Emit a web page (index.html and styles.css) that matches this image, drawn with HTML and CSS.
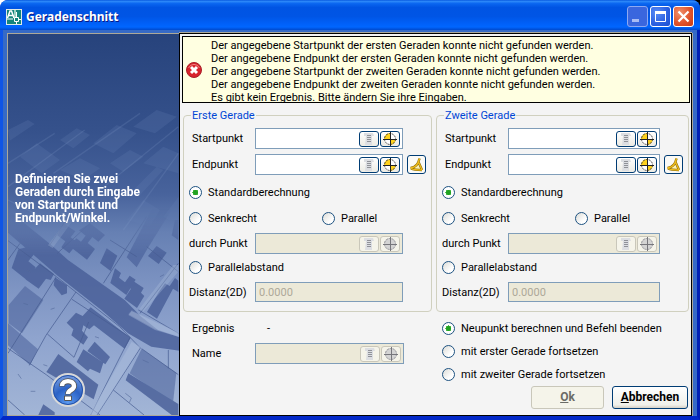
FILE: index.html
```
<!DOCTYPE html>
<html lang="de">
<head>
<meta charset="utf-8">
<title>Geradenschnitt</title>
<link rel="stylesheet" href="styles.css">
</head>
<body>
<svg class="defs" width="0" height="0" aria-hidden="true">
  <defs>
    <symbol id="i-list" viewBox="0 0 18 14">
      <path class="paper" d="M4 1h9l1 3h-2v9H5l1-9H4z"/>
      <path class="lines" d="M7 3.500h4M7 5.500h4M7 7.500h4M7 9.500h4"/>
    </symbol>
    <symbol id="i-target" viewBox="0 0 18 14">
      <circle class="disc" cx="9" cy="7" r="6"/>
      <path class="quad" d="M9 7V1a6 6 0 0 0-6 6zM9 7V13a6 6 0 0 0 6-6z"/>
      <circle class="ring" cx="9" cy="7" r="5.500"/>
      <path class="cross" d="M9.500 0v14M2 7.500h14"/>
    </symbol>
    <symbol id="i-angle" viewBox="0 0 17 17">
      <path d="M3 12l4 1h5L9.500 8.500z" fill="#fff3b0"/>
      <path d="M11.500 2.500c-1 5-4 9-9 9.500M10.500 6l3.500 8M3 12.500c3 1.500 6 1.500 11 1.500" fill="none" stroke="#8a6a08" stroke-width="2.400"/>
      <path d="M11.500 2.500c-1 5-4 9-9 9.500M10.500 6l3.500 8M3 12.500c3 1.500 6 1.500 11 1.500" fill="none" stroke="#eebc1c" stroke-width="1.300"/>
    </symbol>
  </defs>
</svg>
<div class="window">
  <header class="titlebar">
    <svg class="app-icon" width="16" height="16" viewBox="0 0 16 16" aria-hidden="true">
      <path fill="#dfe9e6" d="M0 0h16v16H0z"/>
      <path fill="#14857c" d="M1 1h14v14H1z"/>
      <path fill="#9fd0c4" d="M8 1h2v7H8z"/>
      <path d="M1.500 9L4 2h1.500L8 9M3 6.500h4" fill="none" stroke="#fff" stroke-width="1.500"/>
      <path d="M1 10h6M10.500 3v5M10.500 12v3M12 10.500h3M8.500 8.500h4v4h-4z" fill="none" stroke="#fff"/>
    </svg>
    <h1>Geradenschnitt</h1>
    <div class="caption-buttons">
      <button class="cap" disabled aria-label="Minimieren"><svg width="19" height="19" viewBox="0 0 19 19"><path fill="#a9bcf4" d="M4 12h7v3H4z"/></svg></button>
      <button class="cap" aria-label="Maximieren"><svg width="19" height="19" viewBox="0 0 19 19"><path fill="none" stroke="#fff" d="M4.500 4.500h10v10h-10z"/><path fill="#fff" d="M4 4h11v3H4z"/></svg></button>
      <button class="cap close" aria-label="Schließen"><svg width="19" height="19" viewBox="0 0 19 19"><path stroke="#fff" stroke-width="2.200" d="M4.500 4.500l10 10M14.500 4.500l-10 10"/></svg></button>
    </div>
  </header>
  <div class="body">
    <aside class="side">
      <svg class="map" viewBox="0 0 171 381" preserveAspectRatio="xMidYMax slice" aria-hidden="true">
        <defs>
          <linearGradient id="sky" x2="0" y2="1">
            <stop offset="0" stop-color="#27437c"/>
            <stop offset=".25" stop-color="#35518b"/>
            <stop offset=".42" stop-color="#48639c"/>
            <stop offset=".52" stop-color="#6680b3"/>
            <stop offset=".68" stop-color="#8096c4"/>
            <stop offset=".8" stop-color="#8fa4ce"/>
            <stop offset="1" stop-color="#a2b5d6"/>
          </linearGradient>
          <linearGradient id="fade" x2="0" y2="1">
            <stop offset=".46" stop-color="#fff" stop-opacity="0"/>
            <stop offset=".58" stop-color="#fff"/>
          </linearGradient>
          <mask id="near" maskUnits="userSpaceOnUse" x="0" y="0" width="171" height="381"><path fill="url(#fade)" d="M0 0h171v381H0z"/></mask>
        </defs>
        <path fill="url(#sky)" d="M0 0h171v381H0z"/>
        <g transform="translate(-8 -4) scale(.33333)" fill="#6681b5" opacity=".22">
          <path d="M280 340l70-55 60 25-70 60zM400 290l70-50 60 20-65 50zM60 380l50-40 70 50-55 40zM180 330l50-35 40 20-50 40zM24 300l60-30 20 12-75 50zM330 400l60-40 40 20-60 45zM430 400l60-50 45 20v60zM180 420l60-35 60 30-50 35z"/>
          <path d="M380 570l50-60 50 30-30 50zM490 560l46-60v70h-30zM400 480l70-70 20 10-70 75z"/>
        </g>
        <g transform="translate(-8 -4) scale(.33333)" fill="none" stroke="#8199c8" stroke-width="4" opacity=".2">
          <path d="M24 470l230-170M160 430L420 250M300 480l235-190M370 600l165-230M24 400l140-90M24 510l120 60"/>
        </g>
        <g mask="url(#near)"><g transform="translate(-8 186) scale(.33333)">
          <g fill="#485f98" opacity=".82">
            <path d="M24 -30l130 105 50 45 170 120 50 50 50 40 65 22v40l-85-12-70-40-80-70-130-102L24 38z"/>
            <path d="M270 10l45 35-20 20-18-14-14 18 22 18-24 32-52-40 20-24 14 10 14-18-20-16zM190 10l36 24-14 18 22 16-26 32-24-18 12-18-24-18zM55 88l30-8 16 24-16 20 22 18-24 40-48-38zM120 130l42 32-10 18-14-4-22 30-40-28z"/>
            <path opacity=".8" d="M460 -40h60l-80 130-30 52-30-30z"/>
            <path d="M345 145l18 14-6 14 18 14 14-20 18 12-28 46-48-36zM395 180l36 24-8 14 10 10-22 36-38-28 20-30-10-8zM320 85l32 22-20 46-32-24zM470 78l30 20-24 34-32-24z"/>
            <path d="M475 218l20-28 14 8 16-24 10 8v34l-16-10-48 90-30-20zM525 0h10v60l-20-14z"/>
            <path d="M165 172l36 24v24l-16 6-24-30z"/>
            <path d="M272 262l120 92-18 32-92-70-14 12-18-12-4 16 18 20-14 22-36-28 6-18-20-20 28-30 20 10z"/>
            <path d="M284 365l46 46-14 22-54-40zM250 388l60 40-10 32-30-14-6 8-34-28z"/>
            <path d="M175 402l120 92-14 44-142-82z"/>
            <path opacity=".65" d="M75 198l55 42-64 100-40-30v-55zM24 310l90 78-24 48-66-60z"/>
            <path opacity=".65" d="M425 386l104 72-10 92-130-90z"/>
            <path d="M385 460l150 92v33h-20l-138-104zM130 553l34 24v10h-50z"/>
          </g>
          <g fill="none" stroke="#465c91" stroke-width="3" opacity=".7">
            <path d="M24 62l145 108 190 150 62 64-130 201M168 172L24 400M228 216l-90 130-50 90M142 342l80 70 44-106M216 238L390 352 272 585M24 385l116 80 160 120M24 540l50 45M425 386l110 78M505 390v55M340 510l92 75M60 70L24 120M230 -45l-84 125M330 -45L172 100M440 -10L310 190M535 130L420 280M440 80l95 75M330 60l80 50M535 340l-120-70"/>
          </g>
          <g fill="#a9bbdb" opacity=".6">
            <path d="M395 272l140 65v12l-70-20-80-45zM395 365l26 16-130 204h-24l102-174z"/>
            <path opacity=".6" d="M200 0h20l-62 84-14-8zM520 135h15v20L430 275l-12-8z"/>
          </g>
          <path fill="none" stroke="#54699b" stroke-width="3" opacity=".6" d="M70 250l14 4M152 268l12-4M285 350l12 4M54 462l10 14M92 514h14M376 520l18 14-6 14M428 420l18 8M340 180l12 4M80 150l12 6M480 170l12-6M130 434l12 4M250 200l-12-8"/>
        </g></g>
      </svg>
      <p class="hint">Definieren Sie zwei Geraden durch Eingabe von Startpunkt und Endpunkt/Winkel.</p>
      <button class="help" aria-label="Hilfe">
        <svg width="36" height="36" viewBox="0 0 36 36">
          <defs><radialGradient id="ball" cx=".5" cy=".9" r=".9"><stop offset="0" stop-color="#5c9af0"/><stop offset=".5" stop-color="#2b62c6"/><stop offset="1" stop-color="#7fa3e2"/></radialGradient></defs>
          <circle cx="18" cy="18" r="16" fill="url(#ball)" stroke="#d8d8d8" stroke-width="2"/>
          <circle cx="18" cy="18" r="14.500" fill="none" stroke="#2450a4"/>
          <path d="M12 14.500c0-7 12-7 12-.5 0 4.500-6 3.500-6 8.500" fill="none" stroke="#555" stroke-width="6"/>
          <path fill="#fff" stroke="#555" d="M14.500 24h7v4.500h-7z"/>
          <path d="M12 14c0-6.500 12-6.500 12 0 0 4.500-6 3.500-6 8" fill="none" stroke="#fff" stroke-width="4.400"/>
        </svg>
      </button>
    </aside>
    <main class="panel">
      <div class="alert" role="alert">
        <svg width="16" height="16" viewBox="0 0 16 16" aria-hidden="true">
          <circle cx="8" cy="8" r="7.500" fill="#d8232c" stroke="#a8202a"/>
          <path d="M2.500 6a6 6 0 0 1 11 0" fill="none" stroke="#f08080"/>
          <path d="M5 5l6 6M11 5l-6 6" stroke="#fff" stroke-width="3"/>
        </svg>
        <ul>
          <li>Der angegebene Startpunkt der ersten Geraden konnte nicht gefunden werden.</li>
          <li>Der angegebene Endpunkt der ersten Geraden konnte nicht gefunden werden.</li>
          <li>Der angegebene Startpunkt der zweiten Geraden konnte nicht gefunden werden.</li>
          <li>Der angegebene Endpunkt der zweiten Geraden konnte nicht gefunden werden.</li>
          <li>Es gibt kein Ergebnis. Bitte ändern Sie ihre Eingaben.</li>
        </ul>
      </div>
      <form class="form">
        <fieldset>
          <legend>Erste Gerade</legend>
          <div class="rows">
            <div class="row"><label class="name in" for="s1">Startpunkt</label>
              <div class="field"><input id="s1" type="text"><button type="button" class="mini" aria-label="Liste"><svg><use href="#i-list"/></svg></button><button type="button" class="mini" aria-label="Punkt wählen"><svg><use href="#i-target"/></svg></button></div></div>
            <div class="row"><label class="name in" for="e1">Endpunkt</label>
              <div class="field"><input id="e1" type="text"><button type="button" class="mini" aria-label="Liste"><svg><use href="#i-list"/></svg></button><button type="button" class="mini" aria-label="Punkt wählen"><svg><use href="#i-target"/></svg></button></div>
              <button type="button" class="angle" aria-label="Winkel"><svg><use href="#i-angle"/></svg></button></div>
            <div class="row"><label class="opt"><input type="radio" name="m1" checked>Standardberechnung</label></div>
            <div class="row"><label class="opt half"><input type="radio" name="m1">Senkrecht</label><label class="opt"><input type="radio" name="m1">Parallel</label></div>
            <div class="row"><label class="name" for="d1">durch Punkt</label>
              <div class="field off"><input id="d1" type="text" disabled><button type="button" class="mini" disabled aria-label="Liste"><svg><use href="#i-list"/></svg></button><button type="button" class="mini" disabled aria-label="Punkt wählen"><svg><use href="#i-target"/></svg></button></div></div>
            <div class="row"><label class="opt"><input type="radio" name="m1">Parallelabstand</label></div>
            <div class="row"><label class="name" for="x1">Distanz(2D)</label>
              <div class="field off low"><input id="x1" type="text" value="0.0000" disabled></div></div>
          </div>
        </fieldset>
        <fieldset>
          <legend>Zweite Gerade</legend>
          <div class="rows">
            <div class="row"><label class="name in" for="s2">Startpunkt</label>
              <div class="field"><input id="s2" type="text"><button type="button" class="mini" aria-label="Liste"><svg><use href="#i-list"/></svg></button><button type="button" class="mini" aria-label="Punkt wählen"><svg><use href="#i-target"/></svg></button></div></div>
            <div class="row"><label class="name in" for="e2">Endpunkt</label>
              <div class="field"><input id="e2" type="text"><button type="button" class="mini" aria-label="Liste"><svg><use href="#i-list"/></svg></button><button type="button" class="mini" aria-label="Punkt wählen"><svg><use href="#i-target"/></svg></button></div>
              <button type="button" class="angle" aria-label="Winkel"><svg><use href="#i-angle"/></svg></button></div>
            <div class="row"><label class="opt"><input type="radio" name="m2" checked>Standardberechnung</label></div>
            <div class="row"><label class="opt half"><input type="radio" name="m2">Senkrecht</label><label class="opt"><input type="radio" name="m2">Parallel</label></div>
            <div class="row"><label class="name" for="d2">durch Punkt</label>
              <div class="field off"><input id="d2" type="text" disabled><button type="button" class="mini" disabled aria-label="Liste"><svg><use href="#i-list"/></svg></button><button type="button" class="mini" disabled aria-label="Punkt wählen"><svg><use href="#i-target"/></svg></button></div></div>
            <div class="row"><label class="opt"><input type="radio" name="m2">Parallelabstand</label></div>
            <div class="row"><label class="name" for="x2">Distanz(2D)</label>
              <div class="field off low"><input id="x2" type="text" value="0.0000" disabled></div></div>
          </div>
        </fieldset>
        <div class="result">
          <div class="row"><span class="name in">Ergebnis</span><output>-</output></div>
          <div class="row"><label class="name in" for="n">Name</label>
            <div class="field off"><input id="n" type="text" disabled><button type="button" class="mini" disabled aria-label="Liste"><svg><use href="#i-list"/></svg></button><button type="button" class="mini" disabled aria-label="Punkt wählen"><svg><use href="#i-target"/></svg></button></div></div>
        </div>
        <div class="next">
          <label class="opt"><input type="radio" name="next" checked>Neupunkt berechnen und Befehl beenden</label>
          <label class="opt"><input type="radio" name="next">mit erster Gerade fortsetzen</label>
          <label class="opt"><input type="radio" name="next">mit zweiter Gerade fortsetzen</label>
        </div>
        <footer class="actions">
          <button type="submit" class="push ok" disabled><u>O</u>k</button>
          <button type="button" class="push"><u>A</u>bbrechen</button>
        </footer>
      </form>
    </main>
  </div>
</div>
</body>
</html>
```
FILE: styles.css
```
* { box-sizing: border-box; }

body {
  margin: 0;
  background: linear-gradient(90deg, #fff 50%, #000 50%);
  font: 11px/13px "Roboto", "Liberation Sans", sans-serif;
  color: #000;
}

button, input { font: inherit; color: inherit; }
button { display: flex; align-items: center; justify-content: center; padding: 0; }
h1, p, ul { margin: 0; padding: 0; }
.defs { position: absolute; }

.window {
  display: flex;
  flex-direction: column;
  min-height: 100vh;
  border-radius: 8px 8px 0 0;
  overflow: hidden;
  background: #0a3fdc;
}

.titlebar {
  display: flex;
  align-items: center;
  height: 30px;
  padding: 3px 6px 0;
  background: linear-gradient(#0a5be0 0, #2a86f8 5%, #0a66f0 12%, #0054e3 25%, #0055e5 55%, #0060f8 78%, #0066ff 90%, #0049cc 100%);
}
.app-icon { flex: none; }
.titlebar h1 {
  flex: 1;
  padding-left: 4px;
  font: bold 12px/16px "Noto Sans", "Open Sans", sans-serif;
  color: #fff;
  text-shadow: 1px 1px 0 #0a1883;
}
.caption-buttons { display: flex; gap: 2px; }
.cap {
  width: 21px;
  height: 21px;
  border: 1px solid #fff;
  border-radius: 3px;
  background: radial-gradient(circle at 30% 30%, #5a8cf6, #2a5fe0 60%, #1c4fd0);
}
.cap:disabled { border-color: #8ea9f2; background: #3a66de; }
.cap.close { background: radial-gradient(circle at 30% 30%, #f0906c, #e0532c 55%, #c93a12); }

.body {
  flex: 1;
  display: flex;
  padding: 3px 5px 0 4px;
  border: solid;
  border-width: 0 3px 4px;
  border-color: #0f55e6 #0220b4 #0228c8 #0f55e6;
  background: #366ac6;
}

.side {
  position: relative;
  flex: none;
  display: flex;
  flex-direction: column;
  width: 172px;
  padding: 139px 20px 7px 7px;
  border: 1px solid #aca899;
  border-right: 0;
}
.map { position: absolute; inset: 0; width: 100%; height: 100%; }
.hint, .help { position: relative; }
.hint { font-size: 12px; font-weight: bold; color: #fff; }
.help { width: 36px; height: 36px; margin: auto 0 0 35px; border: 0; background: none; }

.panel {
  flex: 1;
  min-width: 0;
  padding: 2px 1px 0 2px;
  border: 1px solid #000;
  box-shadow: 0 -1px #aca899, 1px 0 #aca899;
  background: #f4f4f4;
}
.alert {
  display: flex;
  align-items: center;
  gap: 9px;
  height: 67px;
  padding: 0 3px;
  border: 1px solid #000;
  background: #ffffe1;
}
.alert ul { margin-top: 4px; list-style: none; }

.form { display: grid; grid-template-columns: minmax(0, 249fr) minmax(0, 253fr); column-gap: 4px; padding: 5px 1px 0; }
fieldset {
  min-width: 0;
  margin: 0;
  padding: 4px 0 5px 5px;
  border: 1px solid #d0d0bf;
  border-radius: 4px;
}
legend { margin-left: 2px; padding: 1px 1px 0; color: #0046d5; }
.rows { display: grid; grid-template-columns: minmax(0, 1fr); grid-template-rows: 25px 27px 29px 23px 27px 21px 28px; }
.row { display: flex; align-items: center; }
.name { flex: none; width: 66px; }
.name.in { padding-left: 3px; }

.field {
  flex: 1;
  min-width: 0;
  display: flex;
  align-items: center;
  gap: 1px;
  height: 21px;
  margin-right: 28px;
  padding-right: 2px;
  border: 1px solid #7f9db9;
  background: #fff;
}
.field input { flex: 1; min-width: 0; padding: 0 3px; border: 0; background: none; outline: 0; }
.field.off { background: #ece9d8; color: #aca899; }
.field.low { height: 20px; }
.mini {
  --disc: #fff;
  --quad: #ffd21c;
  --ring: #444;
  --cross: #222;
  flex: none;
  width: 20px;
  height: 16px;
  border: 1px solid #003c74;
  border-radius: 3px;
  background: linear-gradient(#fff, #ecebe4);
}
.mini:disabled {
  --disc: #d4d4d4;
  --quad: #d4d4d4;
  --ring: #98989c;
  --cross: #77777c;
  border-color: #c9c7ba;
  background: #f5f4ea;
}
.mini svg { flex: none; width: 18px; height: 14px; }
.paper { fill: #dcdee2; }
.lines { stroke: #909298; }
.disc { fill: var(--disc); }
.quad { fill: var(--quad); }
.ring { fill: none; stroke: var(--ring); stroke-dasharray: 2 1; }
.cross { fill: none; stroke: var(--cross); }
.angle {
  flex: none;
  width: 19px;
  height: 19px;
  margin: 0 5px 0 -24px;
  border: 1px solid #003c74;
  border-radius: 3px;
  background: #fbfaf6;
}
.angle svg { flex: none; width: 17px; height: 17px; }

.opt { display: flex; align-items: center; gap: 6px; }
.opt.half { flex: 0 0 133px; }
.opt input {
  appearance: none;
  flex: none;
  width: 13px;
  height: 13px;
  margin: 0;
  border: 1px solid #1d5281;
  border-radius: 50%;
  background: linear-gradient(135deg, #dcdcd7, #fff 70%);
}
.opt input:checked { background: radial-gradient(circle, #21a121 0 2px, #55c455 3px, #fff 3px); }

.result { padding: 4px 0 0 6px; }
.result .row { height: 25px; }
.result output { padding-left: 12px; }
.next { display: grid; grid-auto-rows: 23px; padding: 5px 0 0 6px; }
.actions { grid-column: 1 / -1; display: flex; justify-content: flex-end; gap: 8px; padding: 0 1px 4px 0; }
.push {
  width: 76px;
  height: 23px;
  border: 1px solid #003c74;
  border-radius: 3px;
  background: linear-gradient(#fff, #f0f0ea 85%, #d6d0c5);
  font-size: 12px;
  font-weight: bold;
}
.push.ok { width: 73px; }
.push:disabled { border-color: #c9c7ba; background: #f5f4ea; color: #6b6b66; }
```
